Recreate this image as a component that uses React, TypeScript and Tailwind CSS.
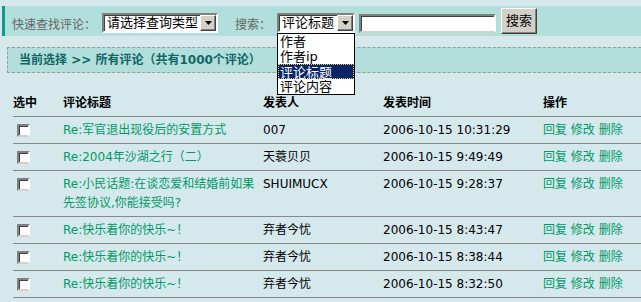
const FONT = "font-['DejaVu_Sans','Noto_Sans_CJK_SC',sans-serif]";

type Row = {
    title: string[];
    author: string;
    time: string;
};

const ROWS: Row[] = [
    { title: ["Re:军官退出现役后的安置方式"], author: "007", time: "2006-10-15 10:31:29" },
    { title: ["Re:2004年沙湖之行（二）"], author: "天蓑贝贝", time: "2006-10-15 9:49:49" },
    {
        title: ["Re:小民话题:在谈恋爱和结婚前如果", "先签协议,你能接受吗?"],
        author: "SHUIMUCX",
        time: "2006-10-15 9:28:37",
    },
    { title: ["Re:快乐着你的快乐~！"], author: "弃者今忧", time: "2006-10-15 8:43:47" },
    { title: ["Re:快乐着你的快乐~！"], author: "弃者今忧", time: "2006-10-15 8:38:44" },
    { title: ["Re:快乐着你的快乐~！"], author: "弃者今忧", time: "2006-10-15 8:32:50" },
];

const OPTIONS = ["作者", "作者ip", "评论标题", "评论内容"];

function ArrowButton() {
    return (
        <span className="flex h-[16px] w-[16px] shrink-0 items-center justify-center border border-t-white border-l-white border-r-[#404040] border-b-[#404040] bg-[#d4d0c8] shadow-[inset_-1px_-1px_0_#808080]">
            <svg width="7" height="4" viewBox="0 0 7 4">
                <path d="M0 0h7L3.5 4z" fill="#000" />
            </svg>
        </span>
    );
}

function FakeSelect({ label, width }: { label: string; width: string }) {
    return (
        <div
            className={`flex h-[20px] ${width} items-center justify-between border-2 border-t-[#808080] border-l-[#808080] border-r-white border-b-white bg-white shadow-[inset_1px_1px_0_#404040]`}
        >
            <span className="pl-[3px] text-[13px] leading-[16px] whitespace-nowrap text-black">{label}</span>
            <ArrowButton />
        </div>
    );
}

function Checkbox() {
    return (
        <span className="ml-[4px] mt-[3px] block h-[13px] w-[13px] border-2 border-t-[#808080] border-l-[#808080] border-r-white border-b-[#d4d0c8] bg-white shadow-[inset_1px_1px_0_#404040]" />
    );
}

function Cursor() {
    return (
        <svg className="absolute left-[330px] top-[68px]" width="14" height="23" viewBox="0 0 14 23">
            <path
                d="M0.5 0.5v18l4.5-4.5 3.5 7.5 3-1.5-3.5-7h6z"
                fill="#fff"
                stroke="#000"
                strokeWidth="1"
                strokeLinejoin="miter"
            />
        </svg>
    );
}

export default function App() {
    return (
        <div className={`relative min-h-[302px] w-[641px] bg-[#d5e9ed] pt-[6px] text-[12px] ${FONT}`}>
            {/* quick search bar */}
            <div className="ml-[2px] flex h-[30px] items-start border-l-[3px] border-[#0f9a8c] bg-[#b2dfdb] pl-[7px]">
                <span className="mt-[11px] w-[90px] leading-[16px] whitespace-nowrap text-[#666]">快速查找评论：</span>
                <div className="mt-[7px]">
                    <FakeSelect label="请选择查询类型" width="w-[116px]" />
                </div>
                <span className="mt-[11px] ml-[17px] w-[42px] leading-[16px] whitespace-nowrap text-[#666]">搜索：</span>
                <div className="relative mt-[7px]">
                    <FakeSelect label="评论标题" width="w-[78px]" />
                    <ul className="absolute top-full left-0 z-10 w-[78px] border border-black bg-white text-[13px] leading-[15px] text-black">
                        {OPTIONS.map((o) => (
                            <li
                                key={o}
                                className={
                                    o === "评论标题"
                                        ? "h-[15px] border border-dotted border-[#f2d24a] bg-[#0a246a] pl-[1px] text-white"
                                        : "h-[15px] pl-[2px]"
                                }
                            >
                                {o}
                            </li>
                        ))}
                    </ul>
                </div>
                <div className="mt-[8px] ml-[4px] h-[19px] w-[137px] border-2 border-t-[#808080] border-l-[#808080] border-r-white border-b-[#d4d0c8] bg-white shadow-[inset_1px_1px_0_#404040]" />
                <button
                    type="button"
                    className="mt-[2px] ml-[5px] h-[26px] w-[36px] border border-t-white border-l-white border-r-[#404040] border-b-[#404040] bg-[#d4d0c8] text-[13px] text-black shadow-[inset_-1px_-1px_0_#808080]"
                >
                    搜索
                </button>
            </div>

            {/* current selection bar */}
            <div className="mt-[11px] ml-[7px] flex h-[26px] items-center border border-r-0 border-dashed border-[#9a9a9a] bg-[#b2dfdb] pl-[11px]">
                <span className="font-bold whitespace-nowrap text-[#116666]">
                    当前选择 &gt;&gt; 所有评论（共有1000个评论）
                </span>
            </div>

            {/* list */}
            <div className="mt-[19px] ml-[13px]">
                <div className="grid grid-cols-[50px_200px_120px_160px_1fr] border-b border-[#888] pt-[3px] pb-[5px] leading-[16px] font-bold text-black">
                    <span>选中</span>
                    <span>评论标题</span>
                    <span>发表人</span>
                    <span>发表时间</span>
                    <span>操作</span>
                </div>
                {ROWS.map((r, i) => (
                    <div
                        key={i}
                        className="grid grid-cols-[50px_200px_120px_160px_1fr] items-start border-b border-[#888] pt-[4px] pb-[3px] leading-[19px]"
                    >
                        <Checkbox />
                        <span className="whitespace-nowrap text-[#009966]">
                            {r.title.map((t, j) => (
                                <span key={j} className="block">
                                    {t}
                                </span>
                            ))}
                        </span>
                        <span className="whitespace-nowrap text-black">{r.author}</span>
                        <span className="whitespace-nowrap text-black">{r.time}</span>
                        <span className="whitespace-nowrap text-[#009966]">回复 修改 删除</span>
                    </div>
                ))}
            </div>

            <Cursor />
        </div>
    );
}
